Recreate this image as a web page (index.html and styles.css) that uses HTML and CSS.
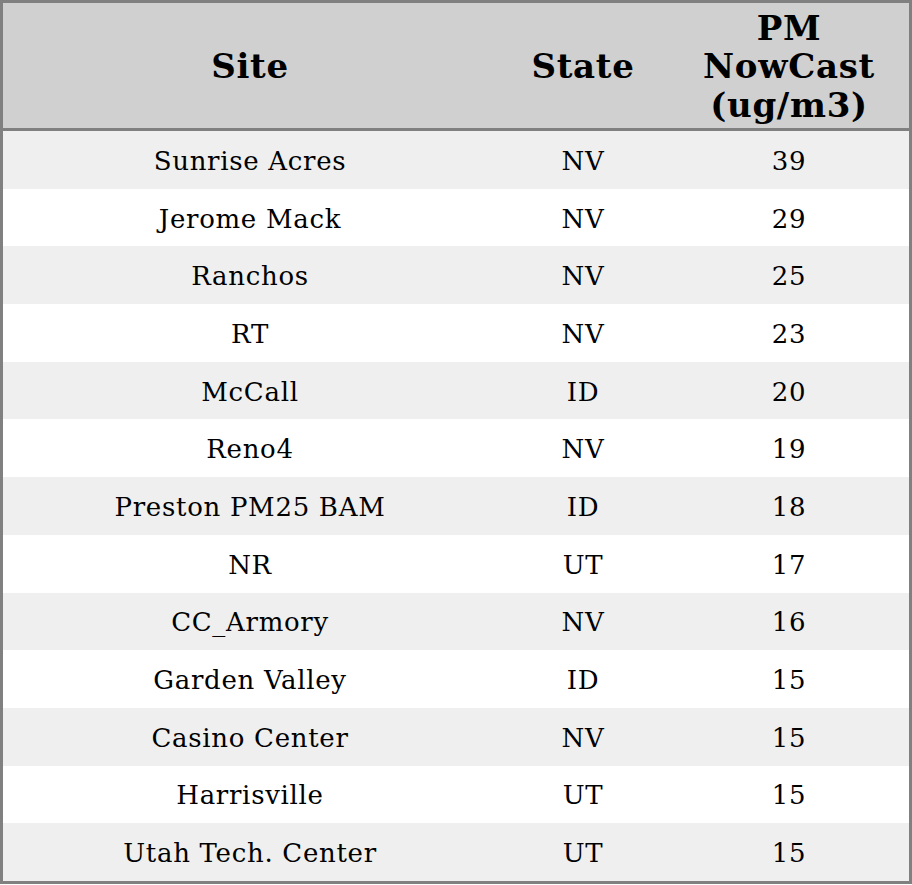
FILE: index.html
```html
<!DOCTYPE html>
<html>
<head>
<meta charset="utf-8">
<link rel="stylesheet" href="styles.css">
</head>
<body>
<table class="aq">
  <colgroup>
    <col class="c-site">
    <col class="c-state">
    <col class="c-pm">
  </colgroup>
  <thead>
    <tr><th>Site</th><th>State</th><th>PM<br>NowCast<br>(ug/m3)</th></tr>
  </thead>
  <tbody>
    <tr><td>Sunrise Acres</td><td>NV</td><td>39</td></tr>
    <tr><td>Jerome Mack</td><td>NV</td><td>29</td></tr>
    <tr><td>Ranchos</td><td>NV</td><td>25</td></tr>
    <tr><td>RT</td><td>NV</td><td>23</td></tr>
    <tr><td>McCall</td><td>ID</td><td>20</td></tr>
    <tr><td>Reno4</td><td>NV</td><td>19</td></tr>
    <tr><td>Preston PM25 BAM</td><td>ID</td><td>18</td></tr>
    <tr><td>NR</td><td>UT</td><td>17</td></tr>
    <tr><td>CC_Armory</td><td>NV</td><td>16</td></tr>
    <tr><td>Garden Valley</td><td>ID</td><td>15</td></tr>
    <tr><td>Casino Center</td><td>NV</td><td>15</td></tr>
    <tr><td>Harrisville</td><td>UT</td><td>15</td></tr>
    <tr><td>Utah Tech. Center</td><td>UT</td><td>15</td></tr>
  </tbody>
</table>
</body>
</html>
```
FILE: styles.css
```css
html, body {
  margin: 0;
  padding: 0;
  background: #ffffff;
}
.aq {
  width: 912px;
  border-collapse: separate;
  border-spacing: 0;
  table-layout: fixed;
  border: 3px solid #808080;
  font-family: "DejaVu Serif", serif;
  color: #000;
}
.c-site { width: 494px; }
.c-state { width: 172px; }
.c-pm { width: 240px; }
.aq th {
  background: #d0d0d0;
  font-size: 34px;
  letter-spacing: 0.7px;
  font-weight: bold;
  line-height: 38.5px;
  height: 128px;
  padding: 2px 0 0;
  box-sizing: border-box;
  text-align: center;
  vertical-align: middle;
  border-bottom: 3px solid #808080;
}
.aq td {
  font-size: 26px;
  letter-spacing: 0.7px;
  line-height: 30px;
  height: 57.69px;
  padding: 2px 0 0;
  box-sizing: border-box;
  text-align: center;
  vertical-align: middle;
}
.aq tbody tr:nth-child(odd) td {
  background: #efefef;
}
```
